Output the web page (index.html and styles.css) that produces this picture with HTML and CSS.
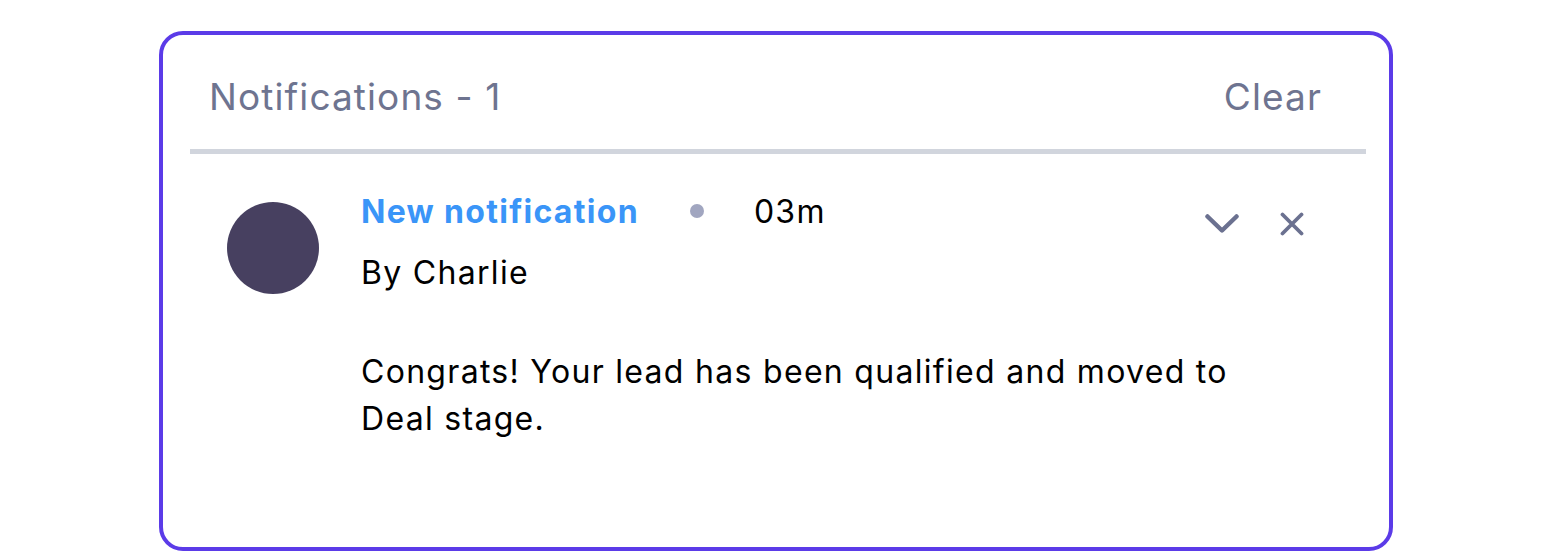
FILE: index.html
```html
<!DOCTYPE html>
<html>
<head>
<meta charset="utf-8">
<link rel="stylesheet" href="styles.css">
</head>
<body>
<div class="card">
  <div class="header">
    <span class="title">Notifications - 1</span>
    <span class="clear">Clear</span>
  </div>
  <div class="item">
    <div class="avatar"></div>
    <div class="content">
      <div class="meta">
        <span class="name">New notification</span>
        <span class="dot"></span>
        <span class="time">03m</span>
        <div class="actions">
          <svg class="chev" width="34" height="20" viewBox="0 0 34 20"><path d="M2.5 2.5 L17 16.5 L31.5 2.5" fill="none" stroke="#6b7190" stroke-width="4.5" stroke-linecap="round" stroke-linejoin="round"/></svg>
          <svg class="close" width="24" height="24" viewBox="0 0 24 24"><path d="M2.5 2.5 L21.5 21.5 M21.5 2.5 L2.5 21.5" fill="none" stroke="#6b7190" stroke-width="3.8" stroke-linecap="round"/></svg>
        </div>
      </div>
      <div class="by">By Charlie</div>
      <p class="message">Congrats! Your lead has been qualified and moved to Deal stage.</p>
    </div>
  </div>
</div>
</body>
</html>
```
FILE: styles.css
```css
html, body {
  margin: 0;
  padding: 0;
  background: #ffffff;
}
body {
  font-family: Inter, "Noto Sans", sans-serif;
}
.card {
  box-sizing: border-box;
  margin: 31px 0 0 159px;
  width: 1234px;
  height: 520px;
  border: 4px solid #5b3be8;
  border-radius: 24px;
  padding: 0 23px 0 27px;
}
.header {
  display: flex;
  align-items: center;
  justify-content: space-between;
  box-sizing: border-box;
  height: 119px;
  padding: 8px 44px 0 19px;
  border-bottom: 5px solid #d1d5dd;
  color: #6e7490;
  font-size: 37px;
  letter-spacing: 1.1px;
}
.item {
  display: flex;
  align-items: flex-start;
  padding: 35px 62px 0 37px;
}
.avatar {
  width: 92px;
  height: 92px;
  border-radius: 50%;
  background: #474060;
  margin-top: 13px;
  flex: none;
}
.content {
  flex: 1;
  margin-left: 42px;
  font-size: 32px;
  letter-spacing: 1.3px;
  color: #000;
}
.meta {
  display: flex;
  align-items: center;
  height: 44px;
}
.name {
  color: #3a95f8;
  font-weight: 700;
}
.dot {
  width: 14px;
  height: 14px;
  border-radius: 50%;
  background: #a1a6c0;
  margin: 0 50px 0 51px;
}
.by {
  margin-top: 20px;
  line-height: 40px;
}
.message {
  margin: 55px 0 0;
  line-height: 47px;
  max-width: 900px;
}
.actions {
  display: flex;
  align-items: center;
  gap: 41px;
  margin-left: auto;
  align-self: flex-start;
  margin-top: 23px;
}
```
